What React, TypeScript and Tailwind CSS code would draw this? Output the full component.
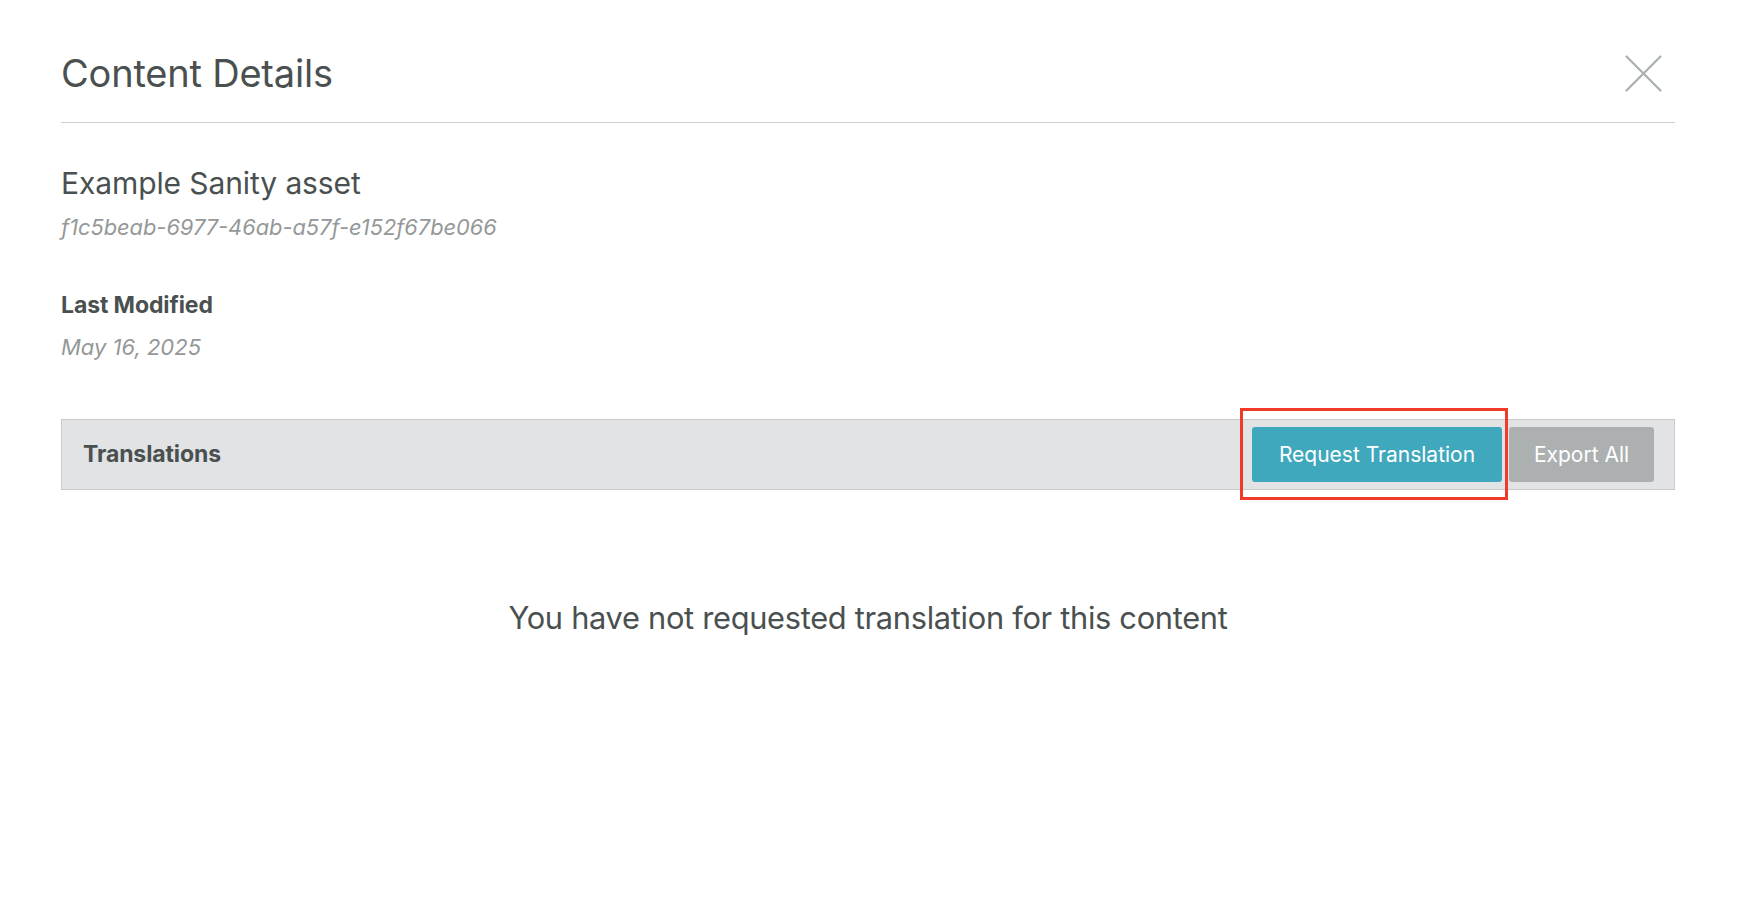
export default function App() {
  return (
    <div
      className="min-h-screen w-full bg-white pl-[61px] pr-[66px] text-[#4a5050]"
      style={{ fontFamily: "Inter, 'Noto Sans', sans-serif" }}
    >
      {/* header */}
      <div className="flex items-center justify-between border-b border-[#cfcfcf] pt-[48px] pb-[24px]">
        <h1 className="text-[38px] leading-[50px] tracking-[-0.2px]">Content Details</h1>
        <button className="mr-[13px] text-[#a9b0ae]">
          <svg width="37" height="37" viewBox="0 0 37 37" fill="none" stroke="currentColor" strokeWidth="2.2" strokeLinecap="round">
            <path d="M1.5 1.5L35.5 35.5M35.5 1.5L1.5 35.5" />
          </svg>
        </button>
      </div>

      {/* asset info */}
      <div className="pt-[40px]">
        <h2 className="text-[30px] leading-[40px] tracking-[-0.1px]">Example Sanity asset</h2>
        <p className="mt-[8px] text-[21.8px] leading-[32px] italic text-[#949898]">
          f1c5beab-6977-46ab-a57f-e152f67be066
        </p>
      </div>

      <div className="pt-[46px]">
        <h3 className="text-[23px] leading-[32px] font-bold tracking-[-0.1px]">Last Modified</h3>
        <p className="mt-[10px] text-[22px] leading-[32px] italic text-[#949898]">May 16, 2025</p>
      </div>

      {/* translations bar */}
      <div className="mt-[56px] flex h-[71px] items-center justify-between border border-[#c9cbcc] bg-[#e2e3e5] pl-[21px] pr-[20px]">
        <span className="text-[23px] font-bold tracking-[-0.1px]">Translations</span>
        <div className="flex gap-[7px]">
          <div className="relative">
            <button className="h-[55px] w-[250px] rounded-[3px] bg-[#3fa8bd] text-[21px] text-white">
              Request Translation
            </button>
            <div className="pointer-events-none absolute -left-[12px] -top-[19px] h-[92px] w-[268px] border-[3px] border-[#f03a2a]" />
          </div>
          <button className="h-[55px] w-[145px] rounded-[3px] bg-[#acb0b0] text-[21px] text-white">
            Export All
          </button>
        </div>
      </div>

      {/* empty state */}
      <p className="pt-[108px] text-center text-[30.8px] leading-[40px] tracking-[-0.3px]">
        You have not requested translation for this content
      </p>
    </div>
  );
}
